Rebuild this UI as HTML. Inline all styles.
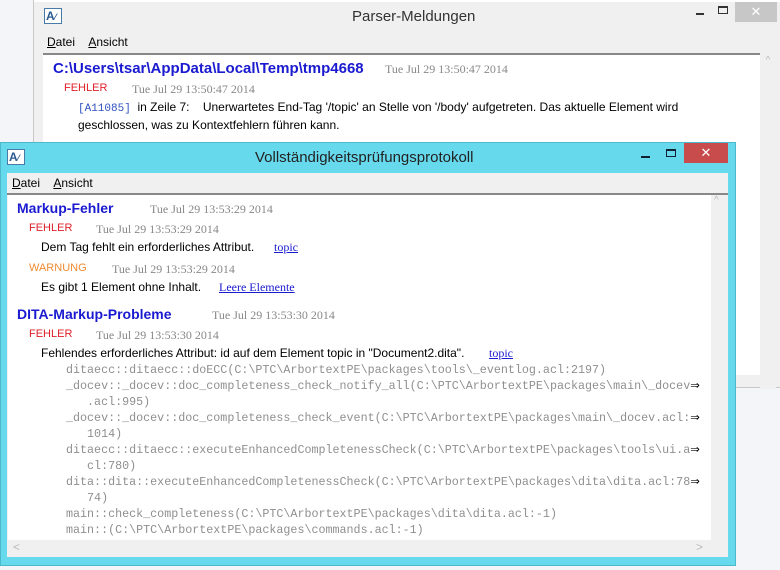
<!DOCTYPE html>
<html><head><meta charset="utf-8"><style>
*{margin:0;padding:0;box-sizing:border-box}
body{width:780px;height:570px;overflow:hidden;position:relative;background:#f3f5f8;font-family:"Liberation Sans",sans-serif}
.abs{position:absolute;white-space:nowrap}
.ser{font-family:"Liberation Serif",serif;color:#888;font-size:12px}
.mono{font-family:"Liberation Mono",monospace;font-size:11.7px;color:#8f8f8f}
.red{color:#e0202a;font-size:11px}
.h{color:#1a1ad0;font-weight:bold}
a{color:#1a1ad0;text-decoration:underline;font-family:"Liberation Serif",serif;font-size:12px}
.icon{position:absolute;width:18px;height:16px;border:1px solid #4a7aa8;background:#fff;font:bold 12px "Liberation Sans",sans-serif;color:#2a5a90;line-height:14px;padding-left:1px}
</style></head><body>
<!-- back window -->
<div class="abs" style="left:33px;top:0;width:760px;height:388px;background:#f0f0f0;border:1px solid #c8c8c8"></div>
<div class="abs" style="left:34px;top:0;width:750px;height:2px;background:#fff"></div>
<div class="icon" style="left:44px;top:8px">A<span style="font-size:9px">⁄</span></div>
<div class="abs" style="left:352px;top:8px;font-size:15px;color:#333">Parser-Meldungen</div>
<div class="abs" style="left:696px;top:13px;width:8px;height:2px;background:#333"></div>
<div class="abs" style="left:718px;top:6px;width:10px;height:8px;border:1px solid #333;border-top-width:2px"></div>
<div class="abs" style="left:735px;top:2px;width:42px;height:20px;background:#c7c7c7;color:#fff;text-align:center;font-size:13px;line-height:20px">✕</div>
<div class="abs" style="left:47px;top:35px;font-size:12px;color:#000"><u>D</u>atei &nbsp;&nbsp;&nbsp;<u>A</u>nsicht</div>
<div class="abs" style="left:43px;top:53px;width:717px;height:2px;background:#888"></div>
<div class="abs" style="left:43px;top:55px;width:717px;height:320px;background:#fff"></div>
<div class="abs" style="left:760px;top:55px;width:16px;height:320px;background:#f0f0f0;color:#bbb;font-size:10px;text-align:center">^</div>
<div class="abs" style="left:760px;top:375px;width:16px;height:14px;background:#f0f0f0"></div>
<div class="abs h" style="left:53px;top:60px;font-size:15px">C:\Users\tsar\AppData\Local\Temp\tmp4668</div>
<div class="abs ser" style="left:385px;top:62px">Tue Jul 29 13:50:47 2014</div>
<div class="abs red" style="left:64px;top:82px">FEHLER</div>
<div class="abs ser" style="left:132px;top:82px">Tue Jul 29 13:50:47 2014</div>
<div class="abs" style="left:78px;top:100px;font-size:12px;color:#000"><span style="font-family:'Liberation Mono',monospace;font-size:11px;color:#3050c0">[A11085]</span>&nbsp; in Zeile 7:&nbsp;&nbsp;&nbsp; Unerwartetes End-Tag '/topic' an Stelle von '/body' aufgetreten. Das aktuelle Element wird</div>
<div class="abs" style="left:78px;top:118px;font-size:12px;color:#000">geschlossen, was zu Kontextfehlern führen kann.</div>

<!-- front window -->
<div class="abs" style="left:0;top:142px;width:736px;height:424px;background:#67d9ec;border:1px solid #4cb8cc"></div>
<div class="icon" style="left:7px;top:149px">A<span style="font-size:9px">⁄</span></div>
<div class="abs" style="left:255px;top:149px;font-size:15px;color:#222">Vollständigkeitsprüfungsprotokoll</div>
<div class="abs" style="left:641px;top:156px;width:9px;height:2px;background:#123"></div>
<div class="abs" style="left:666px;top:149px;width:10px;height:8px;border:1px solid #123;border-top-width:2px"></div>
<div class="abs" style="left:684px;top:143px;width:44px;height:20px;background:#c94c4c;color:#fff;text-align:center;font-size:13px;line-height:20px">✕</div>
<div class="abs" style="left:7px;top:173px;width:721px;height:20px;background:#f0f0f0"></div>
<div class="abs" style="left:12px;top:176px;font-size:12px;color:#000"><u>D</u>atei &nbsp;&nbsp;&nbsp;<u>A</u>nsicht</div>
<div class="abs" style="left:7px;top:193px;width:721px;height:2px;background:#888"></div>
<div class="abs" style="left:7px;top:195px;width:721px;height:362px;background:#f0f0f0"></div>
<div class="abs" style="left:8px;top:195px;width:703px;height:345px;background:#fff"></div>
<div class="abs" style="left:714px;top:195px;color:#bbb;font-size:10px">^</div>
<div class="abs" style="left:13px;top:540px;color:#bbb;font-size:12px">&lt;</div>
<div class="abs" style="left:696px;top:540px;color:#bbb;font-size:12px">&gt;</div>

<div class="abs h" style="left:17px;top:200px;font-size:14px">Markup-Fehler</div>
<div class="abs ser" style="left:150px;top:202px">Tue Jul 29 13:53:29 2014</div>
<div class="abs red" style="left:29px;top:222px">FEHLER</div>
<div class="abs ser" style="left:96px;top:222px">Tue Jul 29 13:53:29 2014</div>
<div class="abs" style="left:41px;top:240px;font-size:12px;color:#000">Dem Tag fehlt ein erforderliches Attribut.</div>
<a class="abs" style="left:274px;top:240px">topic</a>
<div class="abs" style="left:29px;top:262px;font-size:11px;color:#f08a30">WARNUNG</div>
<div class="abs ser" style="left:112px;top:262px">Tue Jul 29 13:53:29 2014</div>
<div class="abs" style="left:41px;top:280px;font-size:12px;color:#000">Es gibt 1 Element ohne Inhalt.</div>
<a class="abs" style="left:219px;top:280px">Leere Elemente</a>
<div class="abs h" style="left:17px;top:306px;font-size:14px">DITA-Markup-Probleme</div>
<div class="abs ser" style="left:212px;top:308px">Tue Jul 29 13:53:30 2014</div>
<div class="abs red" style="left:29px;top:328px">FEHLER</div>
<div class="abs ser" style="left:96px;top:328px">Tue Jul 29 13:53:30 2014</div>
<div class="abs" style="left:41px;top:346px;font-size:12px;color:#000">Fehlendes erforderliches Attribut: id auf dem Element topic in "Document2.dita".</div>
<a class="abs" style="left:489px;top:346px">topic</a>
<div class="abs mono" style="left:66px;top:362px;line-height:16px">ditaecc::ditaecc::doECC(C:\PTC\ArbortextPE\packages\tools\_eventlog.acl:2197)<br>_docev::_docev::doc_completeness_check_notify_all(C:\PTC\ArbortextPE\packages\main\_docev<span style="color:#000">⇒</span><br>&nbsp;&nbsp;&nbsp;.acl:995)<br>_docev::_docev::doc_completeness_check_event(C:\PTC\ArbortextPE\packages\main\_docev.acl:<span style="color:#000">⇒</span><br>&nbsp;&nbsp;&nbsp;1014)<br>ditaecc::ditaecc::executeEnhancedCompletenessCheck(C:\PTC\ArbortextPE\packages\tools\ui.a<span style="color:#000">⇒</span><br>&nbsp;&nbsp;&nbsp;cl:780)<br>dita::dita::executeEnhancedCompletenessCheck(C:\PTC\ArbortextPE\packages\dita\dita.acl:78<span style="color:#000">⇒</span><br>&nbsp;&nbsp;&nbsp;74)<br>main::check_completeness(C:\PTC\ArbortextPE\packages\dita\dita.acl:-1)<br>main::(C:\PTC\ArbortextPE\packages\commands.acl:-1)</div>
</body></html>
